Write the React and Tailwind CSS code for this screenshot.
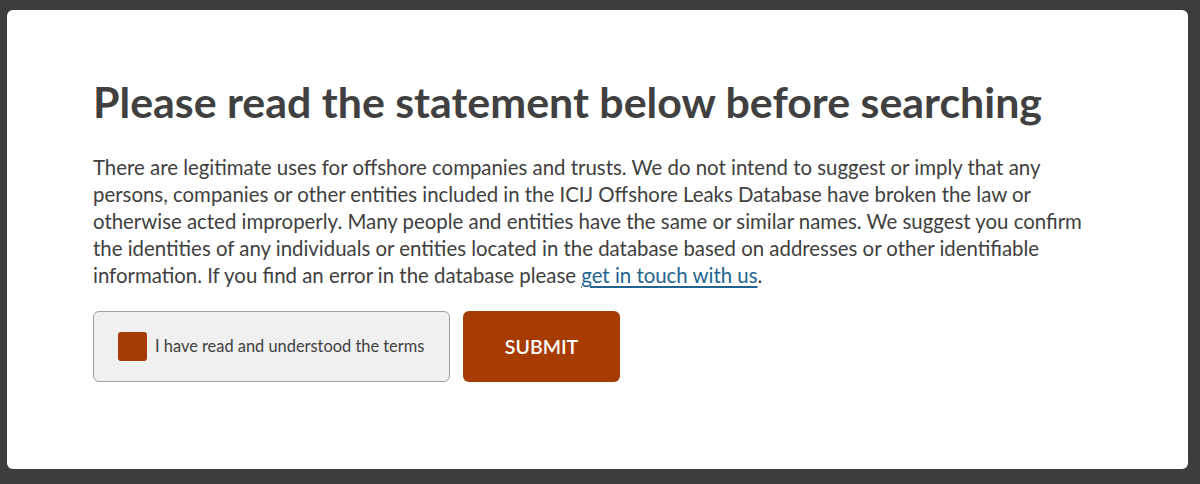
export default function App() {
  return (
    <div className="w-[1200px] h-[484px] bg-[#3d3d3d] pt-[10px] pl-[7px] pr-[12px] pb-[15px]" style={{ fontFamily: "Lato, 'Open Sans', sans-serif" }}>
      <div className="w-full h-full bg-white rounded-[6px] pl-[86px] pr-[60px] pt-[64px]">
        <h1 className="text-[42.9px] leading-[56px] font-bold text-[#404040] m-0">Please read the statement below before searching</h1>
        <p className="mt-[24px] text-[20.4px] leading-[27px] text-[#404040] whitespace-nowrap">
          There are legitimate uses for offshore companies and trusts. We do not intend to suggest or imply that any<br />
          persons, companies or other entities included in the ICIJ Offshore Leaks Database have broken the law or<br />
          otherwise acted improperly. Many people and entities have the same or similar names. We suggest you confirm<br />
          the identities of any individuals or entities located in the database based on addresses or other identifiable<br />
          information. If you find an error in the database please{" "}
          <a href="#" className="text-[#23648f] underline underline-offset-[3px]">get in touch with us</a>.
        </p>
        <div className="mt-[22px] flex gap-[13px]">
          <label className="w-[357px] h-[71px] bg-[#f0f0f0] border border-[#a0a0a0] rounded-[6px] flex items-center pl-[24px] gap-[8px]">
            <span className="w-[29px] h-[29px] bg-[#a63c05] rounded-[3px]"></span>
            <span className="text-[16.4px] text-[#404040]">I have read and understood the terms</span>
          </label>
          <button className="w-[157px] h-[71px] bg-[#a63c02] rounded-[6px] text-white text-[19.5px] font-semibold">SUBMIT</button>
        </div>
      </div>
    </div>
  );
}
